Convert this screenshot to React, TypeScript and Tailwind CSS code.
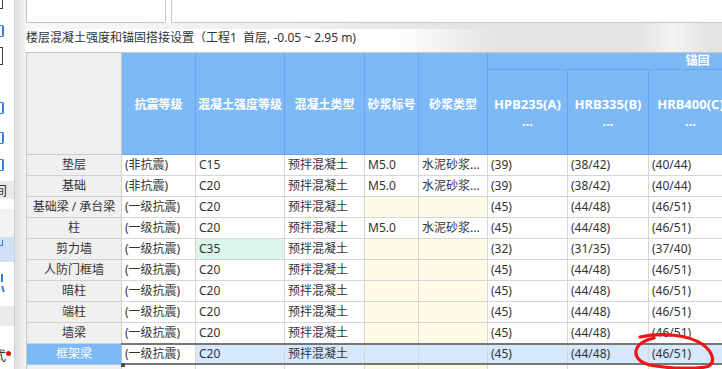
import React from 'react';

type Row = {
  name: string;
  seismic: string;
  grade: string;
  concrete: string;
  mortar: string;
  mortarType: string;
  a: string;
  b: string;
  c: string;
  green?: boolean;
  selected?: boolean;
};

const rows: Row[] = [
  { name: '垫层', seismic: '(非抗震)', grade: 'C15', concrete: '预拌混凝土', mortar: 'M5.0', mortarType: '水泥砂浆...', a: '(39)', b: '(38/42)', c: '(40/44)' },
  { name: '基础', seismic: '(非抗震)', grade: 'C20', concrete: '预拌混凝土', mortar: 'M5.0', mortarType: '水泥砂浆...', a: '(39)', b: '(38/42)', c: '(40/44)' },
  { name: '基础梁 / 承台梁', seismic: '(一级抗震)', grade: 'C20', concrete: '预拌混凝土', mortar: '', mortarType: '', a: '(45)', b: '(44/48)', c: '(46/51)' },
  { name: '柱', seismic: '(一级抗震)', grade: 'C20', concrete: '预拌混凝土', mortar: 'M5.0', mortarType: '水泥砂浆...', a: '(45)', b: '(44/48)', c: '(46/51)' },
  { name: '剪力墙', seismic: '(一级抗震)', grade: 'C35', concrete: '预拌混凝土', mortar: '', mortarType: '', a: '(32)', b: '(31/35)', c: '(37/40)', green: true },
  { name: '人防门框墙', seismic: '(一级抗震)', grade: 'C20', concrete: '预拌混凝土', mortar: '', mortarType: '', a: '(45)', b: '(44/48)', c: '(46/51)' },
  { name: '暗柱', seismic: '(一级抗震)', grade: 'C20', concrete: '预拌混凝土', mortar: '', mortarType: '', a: '(45)', b: '(44/48)', c: '(46/51)' },
  { name: '端柱', seismic: '(一级抗震)', grade: 'C20', concrete: '预拌混凝土', mortar: '', mortarType: '', a: '(45)', b: '(44/48)', c: '(46/51)' },
  { name: '墙梁', seismic: '(一级抗震)', grade: 'C20', concrete: '预拌混凝土', mortar: '', mortarType: '', a: '(45)', b: '(44/48)', c: '(46/51)' },
  { name: '框架梁', seismic: '(一级抗震)', grade: 'C20', concrete: '预拌混凝土', mortar: '', mortarType: '', a: '(45)', b: '(44/48)', c: '(46/51)', selected: true },
  { name: '', seismic: '', grade: '', concrete: '', mortar: '', mortarType: '', a: '', b: '', c: '' },
];

const gridCols = 'grid grid-cols-[95px_74px_89px_80px_54px_69px_80px_81px_84px_87px_88px]';

const Cell = ({ children, bg, center }: { children?: React.ReactNode; bg: string; center?: boolean }) => (
  <div
    className={`h-[21px] overflow-hidden whitespace-nowrap border-r border-b border-[#d6d6d6] text-[12px] leading-[20px] ${bg} ${center ? 'text-center' : 'pl-[3px]'}`}
  >
    {children}
  </div>
);

const HeadCell = ({ children }: { children: React.ReactNode }) => (
  <div className="row-span-2 flex items-center justify-center whitespace-nowrap border-r border-b border-[#6aa7ea] bg-[#7db8f7] pt-[2px] text-[12px] font-bold text-white">
    {children}
  </div>
);

const SubHead = ({ label }: { label: string }) => (
  <div className="flex flex-col items-center justify-center whitespace-nowrap border-r border-b border-[#6aa7ea] bg-[#7db8f7] pt-[2px] text-[13px] font-bold leading-[17px] text-white">
    <span>{label}</span>
    <span>...</span>
  </div>
);

const BlueMark = ({ dark }: { dark?: boolean }) => (
  <div className={`h-[12px] w-[4px] rounded-r-[2px] border-y border-r-2 ${dark ? 'border-[#3a3a3a]' : 'border-[#2f7ee3]'}`} />
);

const Sidebar = () => (
  <div className="flex w-[14px] shrink-0 flex-col bg-white">
    <div className="h-[9px] w-[3px] border-r border-b border-[#3a3a3a]" />
    <div className="h-[16px]" />
    <BlueMark />
    <div className="h-[10px]" />
    <div className="h-[18px] w-[3px] border-y border-r border-[#3a3a3a]" />
    <div className="h-[37px]" />
    <BlueMark />
    <div className="h-[18px]" />
    <BlueMark />
    <div className="h-[15px]" />
    <BlueMark />
    <div className="h-[10px]" />
    <div className="h-[18px] overflow-hidden bg-[#e9e9e9] text-[13px] leading-[18px] text-[#333]">
      <span className="-ml-[6px]">间</span>
    </div>
    <div className="h-[10px]" />
    <div className="h-[28px] bg-[#f3f3f3]" />
    <div className="h-[25px] overflow-hidden bg-[#cfe2f7] pt-[3px]">
      <div className="h-[6px] w-[3px] border-r border-b border-[#2f7ee3]" />
    </div>
    <div className="h-[12px]" />
    <div className="flex h-[22px] flex-col gap-[4px]">
      <div className="h-[8px] w-[3px] border-r-2 border-[#2f7ee3]" />
      <div className="h-[6px] w-[4px] skew-x-12 border-r-2 border-[#2f7ee3]" />
    </div>
    <div className="h-[10px]" />
    <div className="h-[20px] bg-[#ebebeb]" />
    <div className="h-[19px]" />
    <div className="relative h-[20px] overflow-hidden text-[13px] leading-[20px] text-[#333]">
      <span className="-ml-[7px]">式</span>
      <span className="absolute left-[6px] top-[6px] h-[5px] w-[5px] rounded-full bg-[#e01010]" />
    </div>
  </div>
);

export default function App() {
  return (
    <div className="relative flex h-[369px] w-[722px] overflow-hidden bg-white font-['Noto_Sans','Noto_Sans_CJK_SC',sans-serif] text-[#333]">
      <Sidebar />
      <div className="w-[12px] shrink-0 border-l border-[#d0d0d0] bg-linear-to-r from-[#e0e0e0] to-[#f5f5f5]" />

      <main className="flex min-w-0 flex-1 flex-col">
        <div className="flex h-[23px] shrink-0 gap-[5px]">
          <div className="w-[140px] border-x border-b border-[#c6c6c6] bg-white" />
          <div className="flex-1 border-l border-b border-[#c6c6c6] bg-white" />
        </div>

        <div className="h-[29px] shrink-0 bg-[linear-gradient(to_right,#f8f8f8,#ececec_45%,#e4e4e4_62%,#e4e4e4_88%,#f3f3f3_93%,#e4e4e4_98%)]">
          <div className="mt-[6px] h-[23px] w-[470px] bg-[linear-gradient(to_right,#ffffff_78%,rgba(255,255,255,0))] text-[12px] leading-[17px]">
            <span className="-mt-[6px] inline-block whitespace-nowrap">
              楼层混凝土强度和锚固搭接设置（工程1&nbsp;&nbsp;首层, -0.05 ~ 2.95 m)
            </span>
          </div>
        </div>

        <div className="relative flex-1 overflow-hidden border-t border-l border-[#c8c8c8]">
          <div className={`${gridCols} w-max grid-rows-[17px_85px]`}>
            <div className="row-span-2 border-r border-b border-[#c8c8c8] bg-[#efefef]" />
            <HeadCell>抗震等级</HeadCell>
            <HeadCell>混凝土强度等级</HeadCell>
            <HeadCell>混凝土类型</HeadCell>
            <HeadCell>砂浆标号</HeadCell>
            <HeadCell>砂浆类型</HeadCell>
            <div className="col-span-5 flex items-center justify-center border-r border-b border-[#6aa7ea] bg-[#7db8f7] text-[12px] font-bold text-white">
              锚固
            </div>
            <SubHead label="HPB235(A)" />
            <SubHead label="HRB335(B)" />
            <SubHead label="HRB400(C)" />
            <SubHead label="HRB500(E)" />
            <SubHead label="冷轧带肋" />
          </div>

          {rows.map((r, i) => {
            const sel = r.selected;
            const cellBg = sel ? 'bg-[#d5e8fc]' : 'bg-white';
            const mortarBg = sel ? 'bg-[#d5e8fc]' : r.mortar ? 'bg-white' : 'bg-[#fffbe6]';
            return (
              <div key={i} className={`${gridCols} w-max`}>
                <div
                  className={`h-[21px] whitespace-nowrap border-r border-b text-center text-[12px] leading-[20px] ${
                    sel ? 'border-[#9cc8f5] bg-[#7db8f6] text-white' : 'border-[#d0d0d0] bg-[#f0f0f0]'
                  }`}
                >
                  {r.name}
                </div>
                <Cell bg="bg-white">{r.seismic}</Cell>
                <Cell bg={r.green ? 'bg-[#dcf5ea]' : cellBg}>{r.grade}</Cell>
                <Cell bg={cellBg}>{r.concrete}</Cell>
                <Cell bg={mortarBg}>{r.mortar}</Cell>
                <Cell bg={mortarBg}>{r.mortarType}</Cell>
                <Cell bg={cellBg}>{r.a}</Cell>
                <Cell bg={cellBg}>{r.b}</Cell>
                <Cell bg={cellBg}>{r.c}</Cell>
                <Cell bg={cellBg} />
                <Cell bg={cellBg} />
              </div>
            );
          })}

          {/* selection frame on the current row */}
          <div className="absolute left-[94px] right-0 top-[290px] h-[22px] border-y-2 border-[#767676]" />
          <div className="absolute left-[94px] top-[310px] h-[4px] w-[4px] bg-[#505050]" />
        </div>
      </main>

      {/* hand-drawn red mark */}
      <svg className="absolute left-[630px] top-[330px]" width="92" height="39" viewBox="0 0 92 39" fill="none">
        <path
          d="M10 7 C 32 2, 58 5, 72 14 C 82 21, 86 31, 79 36 C 70 39.5, 40 38.5, 22 35.5 C 10 33, 5 27, 6 21 C 7 15, 14 10, 24 8"
          stroke="#f01414"
          strokeWidth="3.2"
          strokeLinecap="round"
        />
      </svg>
    </div>
  );
}
